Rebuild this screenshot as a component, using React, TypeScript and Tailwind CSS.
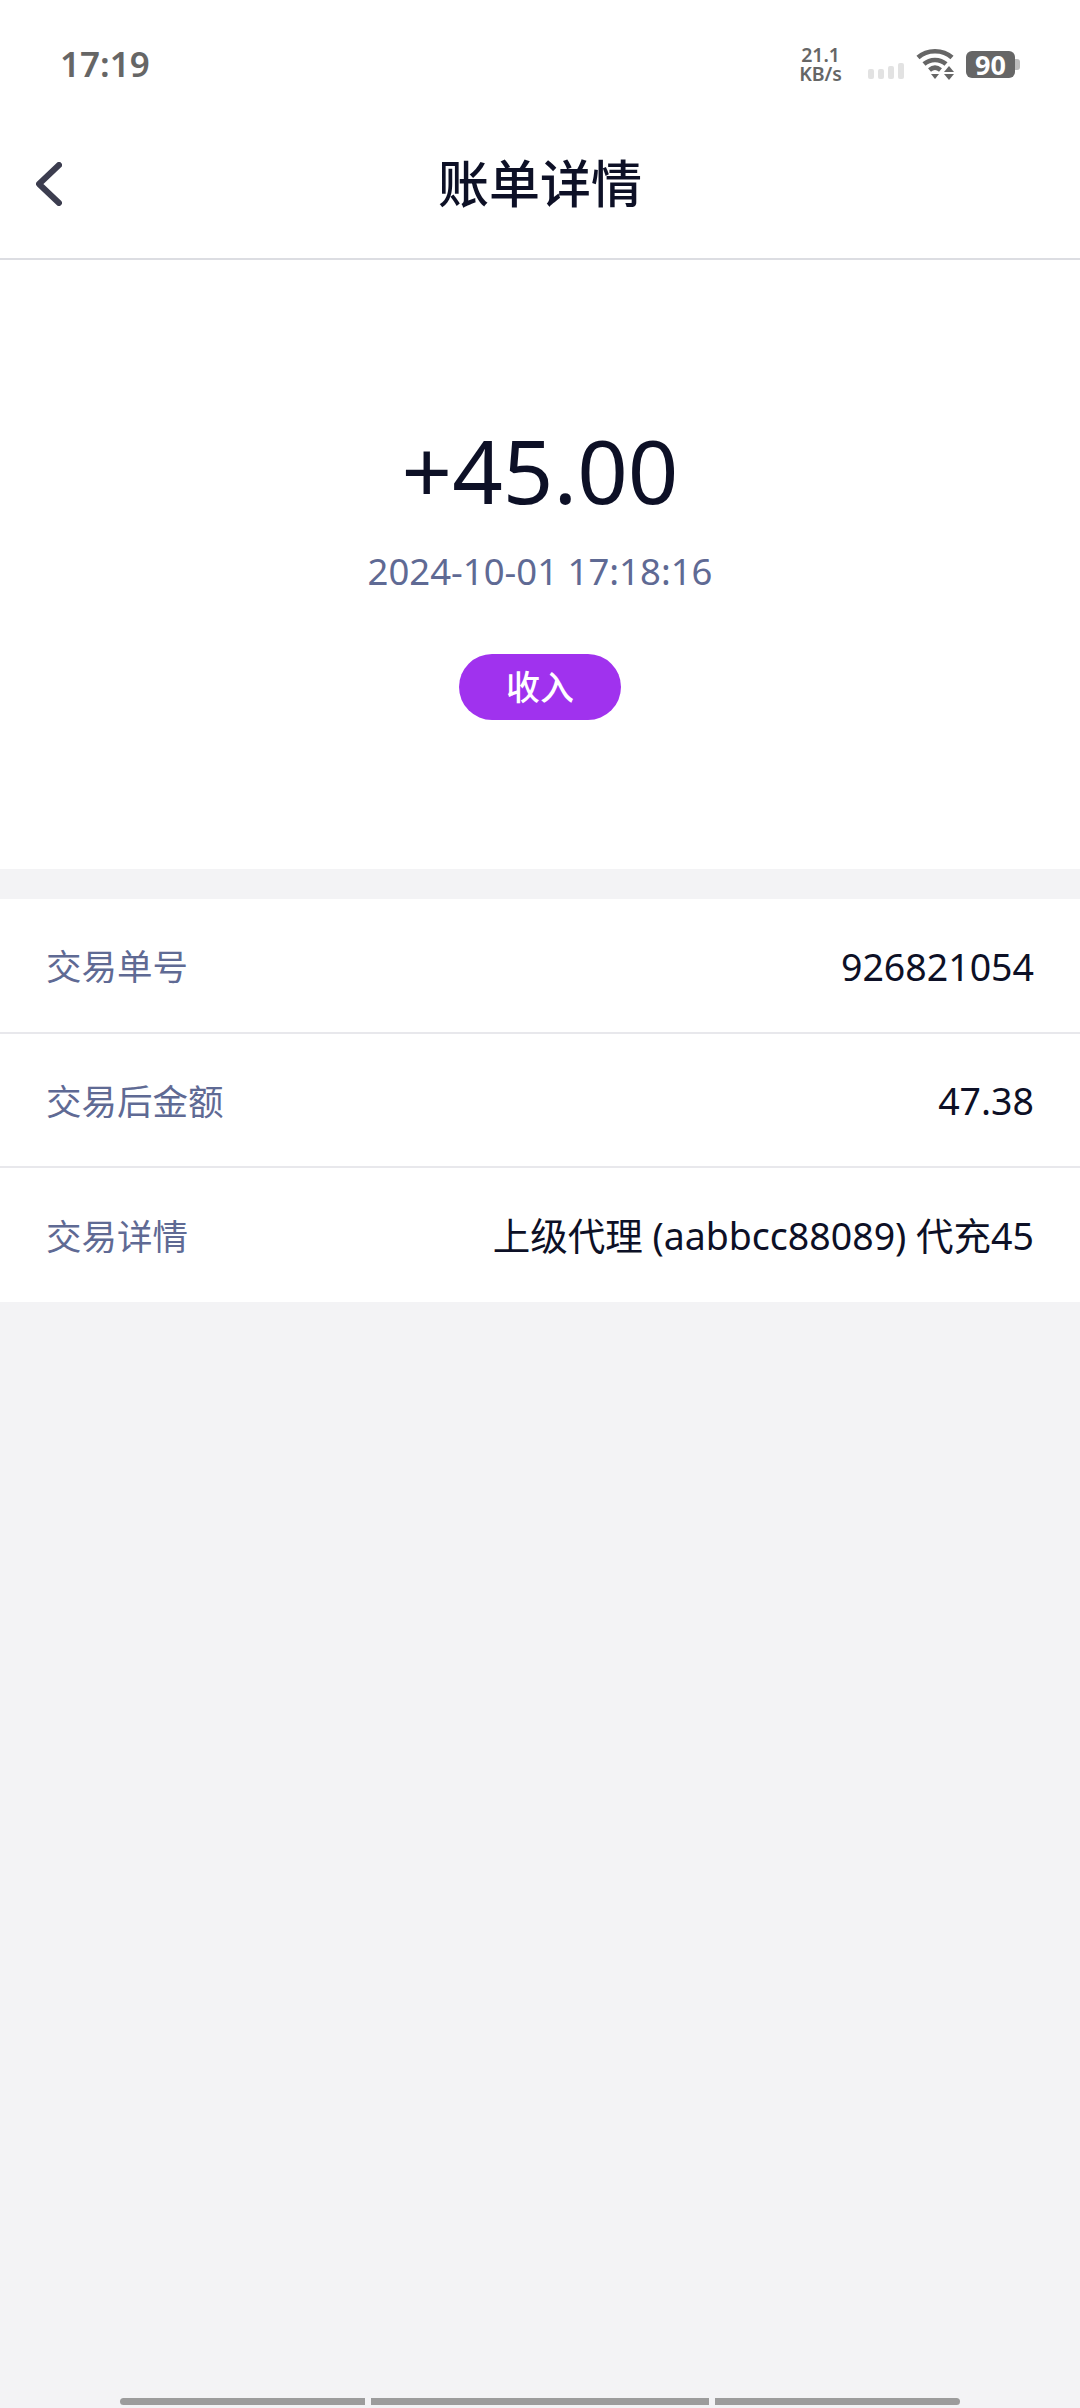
const FONT = "font-['Noto_Sans','Noto_Sans_CJK_SC',sans-serif]";

function WifiIcon() {
    return (
        <svg width="40" height="32" viewBox="0 0 40 32" fill="none">
            <path d="M2 9.5C11 1 27 1 36 9.5" stroke="#666" strokeWidth="4.5" />
            <path d="M8 16C14 10.5 24 10.5 30 16" stroke="#666" strokeWidth="4.5" />
            <path d="M13.5 22C17 19 21 19 24.5 22" stroke="#666" strokeWidth="4.5" />
            <path d="M15 26H23L19 31Z" fill="#666" />
            <path d="M33 18L38 24H28Z" fill="#666" />
            <path d="M33 32L28 26H38Z" fill="#666" />
        </svg>
    );
}

function StatusBar() {
    return (
        <div className="flex h-[100px] items-center justify-between pr-[60px] pl-[60px] pt-[26px]">
            <span className="text-[35px] leading-none font-semibold text-[#666]">17:19</span>
            <div className="flex items-center pt-[2px]">
                <div className="flex flex-col items-center text-[#666] font-semibold">
                    <span className="text-[19.5px] leading-[19px]">21.1</span>
                    <span className="text-[19.5px] leading-[19px]">KB/s</span>
                </div>
                <div className="ml-[26px] mt-[14px] flex items-end gap-[4px]">
                    <div className="h-[10px] w-[6px] rounded-[2px] bg-[#e2e2e2]" />
                    <div className="h-[10px] w-[6px] rounded-[2px] bg-[#e2e2e2]" />
                    <div className="h-[13px] w-[6px] rounded-[2px] bg-[#e2e2e2]" />
                    <div className="h-[16px] w-[6px] rounded-[2px] bg-[#e2e2e2]" />
                </div>
                <div className="ml-[12px] flex">
                    <WifiIcon />
                </div>
                <div className="ml-[10px] flex items-center">
                    <div className="flex h-[27px] w-[49px] items-center justify-center rounded-[6px] bg-[#666] text-[27px] leading-none font-bold text-white">
                        90
                    </div>
                    <div className="h-[11px] w-[5px] rounded-r-[3px] bg-[#bdbdbd]" />
                </div>
            </div>
        </div>
    );
}

function NavBar() {
    return (
        <div className="relative flex h-[160px] items-center justify-center border-b-2 border-[#dcdde2] bg-white pt-[8px]">
            <button className="absolute left-[36px] top-[62px] flex">
                <svg width="26" height="44" viewBox="0 0 26 44" fill="none">
                    <path d="M23 3L3 22L23 41" stroke="#3c3d4f" strokeWidth="6" strokeLinecap="round" strokeLinejoin="round" />
                </svg>
            </button>
            <h1 className="text-[51px] leading-none font-medium text-[#0d1026]">账单详情</h1>
        </div>
    );
}

function Row({ label, value }: { label: string; value: string }) {
    return (
        <div className="flex h-[134px] items-center justify-between border-b-2 border-[#e8e8ec] px-[46px] pt-[3px] first:h-[135px] last:border-b-0">
            <span className="text-[35.5px] text-[#5f6a94]">{label}</span>
            <span className="text-[37.5px] text-[#0d1026]">{value}</span>
        </div>
    );
}

export default function App() {
    return (
        <div className={`${FONT} flex h-[2408px] w-[1080px] flex-col bg-[#f3f3f5]`}>
            <div className="bg-white">
                <StatusBar />
                <NavBar />
                <div className="flex h-[609px] flex-col items-center pt-[166px]">
                    <div className="text-[88.5px] leading-none font-normal text-[#0d1026]">+45.00</div>
                    <div className="mt-[38px] text-[36.5px] leading-none text-[#5f6a94]">2024-10-01 17:18:16</div>
                    <div className="mt-[65px] flex h-[66px] w-[162px] items-center justify-center rounded-full bg-[#a032ee] text-[34px] font-medium text-white">
                        收入
                    </div>
                </div>
            </div>
            <div className="mt-[30px] bg-white">
                <Row label="交易单号" value="926821054" />
                <Row label="交易后金额" value="47.38" />
                <Row label="交易详情" value="上级代理 (aabbcc88089) 代充45" />
            </div>
            <div className="mt-auto mb-[3px] flex justify-center gap-[6px]">
                <div className="h-[7px] w-[245px] rounded-l-full bg-[#9c9c9c]" />
                <div className="h-[7px] w-[338px] bg-[#9c9c9c]" />
                <div className="h-[7px] w-[245px] rounded-r-full bg-[#9c9c9c]" />
            </div>
        </div>
    );
}
